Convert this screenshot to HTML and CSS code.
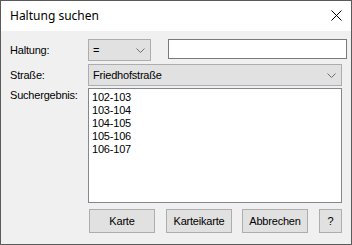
FILE: index.html
```html
<!DOCTYPE html>
<html>
<head>
    <title>Haltung suchen</title>
    <link rel="stylesheet" href="styles.css">
</head>
<body>
  <div class="window">
    <div class="titlebar">
      <span class="title">Haltung suchen</span>
      <svg class="close" width="11" height="11" viewBox="0 0 11 11">
        <path d="M0.5 0.5 L10.5 10.5 M10.5 0.5 L0.5 10.5" stroke="#000" stroke-width="1" fill="none"/>
      </svg>
    </div>

    <form class="content">
      <div class="row row-first">
        <label class="label">Haltung:</label>
        <div class="controls">
          <div class="combo combo-small">
            <span>=</span>
            <svg class="chevron" width="9" height="5" viewBox="0 0 9 5"><path d="M0.5 0.5 L4.5 4.5 L8.5 0.5" stroke="#6d6d6d" fill="none"/></svg>
          </div>
          <input class="textbox" type="text">
        </div>
      </div>

      <div class="row row-second">
        <label class="label">Straße:</label>
        <div class="combo combo-wide">
          <span>Friedhofstraße</span>
          <svg class="chevron" width="9" height="5" viewBox="0 0 9 5"><path d="M0.5 0.5 L4.5 4.5 L8.5 0.5" stroke="#6d6d6d" fill="none"/></svg>
        </div>
      </div>

      <div class="row row-list">
        <label class="label label-top">Suchergebnis:</label>
        <ul class="listbox">
          <li>102-103</li>
          <li>103-104</li>
          <li>104-105</li>
          <li>105-106</li>
          <li>106-107</li>
        </ul>
      </div>

      <div class="buttons">
        <button type="button" class="btn">Karte</button>
        <button type="button" class="btn">Karteikarte</button>
        <button type="button" class="btn">Abbrechen</button>
        <button type="button" class="btn btn-help">?</button>
      </div>
    </form>
  </div>
</body>
</html>
```

FILE: styles.css
```css
body {
    margin: 0;
    font-family: "Liberation Sans", Arial, sans-serif;
    font-size: 11px;
    letter-spacing: -0.2px;
    color: #000;
}
.window {
    width: 352px;
    height: 245px;
    box-sizing: border-box;
    border: 1px solid #5a5a5a;
    background-color: #f0f0f0;
    display: flex;
    flex-direction: column;
}
.titlebar {
    height: 30px;
    background-color: #fff;
    display: flex;
    align-items: center;
    justify-content: space-between;
    padding: 0 9px 0 9px;
}
.title {
    font-family: "Noto Sans", "Open Sans", sans-serif;
    font-size: 12px;
    letter-spacing: 0;
    margin-top: -1px;
}
.close {
    margin-right: 0;
    margin-top: -1px;
}
.content {
    padding: 8px 9px 0 9px;
    margin: 0;
}
.row {
    display: flex;
    align-items: center;
}
.row-second {
    margin-top: 3px;
}
.row-list {
    margin-top: 2px;
    align-items: flex-start;
}
.label {
    width: 78px;
    flex: none;
}
.label-top {
    padding-top: 1px;
}
.controls {
    display: flex;
    align-items: flex-start;
    flex: 1;
    gap: 17px;
}
.combo {
    height: 22px;
    box-sizing: border-box;
    border: 1px solid #adadad;
    background-color: #e1e1e1;
    display: flex;
    align-items: center;
    justify-content: space-between;
    padding: 0 5px 0 4px;
}
.combo-small {
    width: 63px;
}
.combo-wide {
    flex: 1;
}
.chevron {
    margin-top: 1px;
}
.textbox {
    flex: 1;
    height: 20px;
    box-sizing: border-box;
    border: 1px solid #7a7a7a;
    background-color: #fff;
    margin: 0;
    padding: 0;
    outline: none;
}
.listbox {
    flex: 1;
    height: 115px;
    box-sizing: border-box;
    border: 1px solid #828790;
    background-color: #fff;
    list-style: none;
    margin: 0;
    padding: 2px 3px;
}
.listbox li {
    line-height: 13px;
}
.buttons {
    display: flex;
    margin: 6px 0 0 79px;
}
.btn {
    width: 66px;
    height: 24px;
    box-sizing: border-box;
    border: 1px solid #adadad;
    background-color: #e1e1e1;
    font-family: "Liberation Sans", Arial, sans-serif;
    font-size: 11px;
    letter-spacing: -0.2px;
    color: #000;
    padding: 0;
    margin-right: 11px;
}
.btn:nth-child(2) {
    margin-right: 10px;
}
.btn-help {
    width: 23px;
    margin-right: 0;
}
```
